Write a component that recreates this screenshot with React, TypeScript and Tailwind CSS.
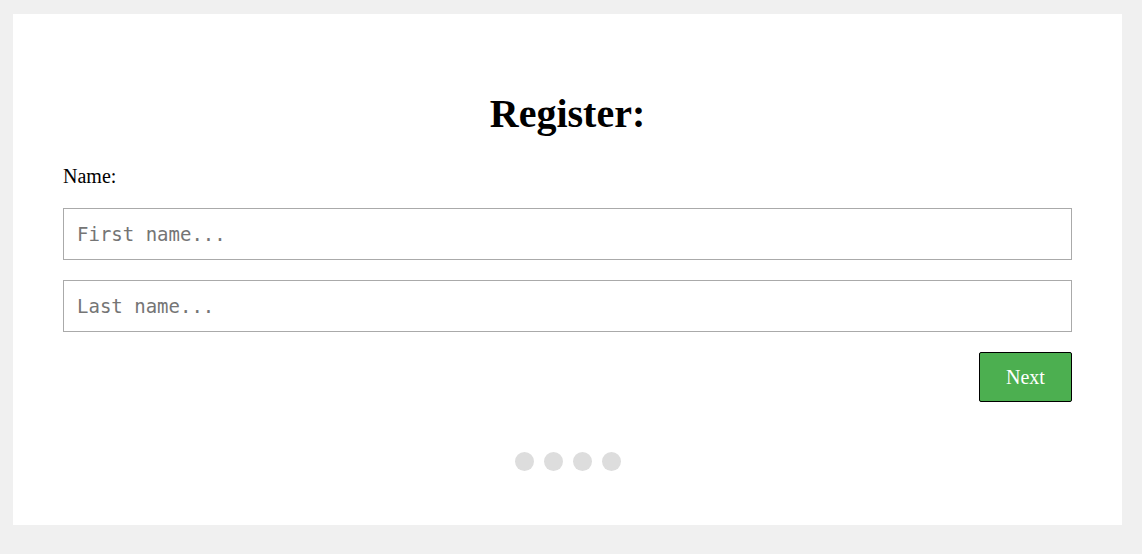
import React from "react";

export default function App() {
  return (
    <div className="min-h-[554px] w-full bg-[#f0f0f0] pt-[14px] pl-[13px]" style={{ fontFamily: '"Liberation Serif", "Times New Roman", serif' }}>
      <div className="w-[1109px] h-[511px] bg-white px-[50px] pt-[50px]">
        <h1 className="mt-[28px] text-center text-[40px] leading-[44px] font-bold text-black">Register:</h1>
        <div className="mt-[29px] text-[20px] leading-[23px] text-black">Name:</div>
        <input
          className="mt-[20px] block w-full h-[52px] border border-[#aaaaaa] px-[13px] text-[19px] outline-none placeholder:text-[#757575]"
          style={{ fontFamily: '"DejaVu Sans Mono", monospace' }}
          placeholder="First name..."
        />
        <input
          className="mt-[20px] block w-full h-[52px] border border-[#aaaaaa] px-[13px] text-[19px] outline-none placeholder:text-[#757575]"
          style={{ fontFamily: '"DejaVu Sans Mono", monospace' }}
          placeholder="Last name..."
        />
        <div className="mt-[20px] flex justify-end">
          <button className="w-[93px] h-[50px] bg-[#4caf50] border border-black rounded-[2px] text-white text-[20px] leading-[23px]">
            Next
          </button>
        </div>
        <div className="mt-[50px] flex justify-center gap-[10px]">
          <span className="w-[19px] h-[19px] rounded-full bg-[#dddddd]" />
          <span className="w-[19px] h-[19px] rounded-full bg-[#dddddd]" />
          <span className="w-[19px] h-[19px] rounded-full bg-[#dddddd]" />
          <span className="w-[19px] h-[19px] rounded-full bg-[#dddddd]" />
        </div>
      </div>
    </div>
  );
}
